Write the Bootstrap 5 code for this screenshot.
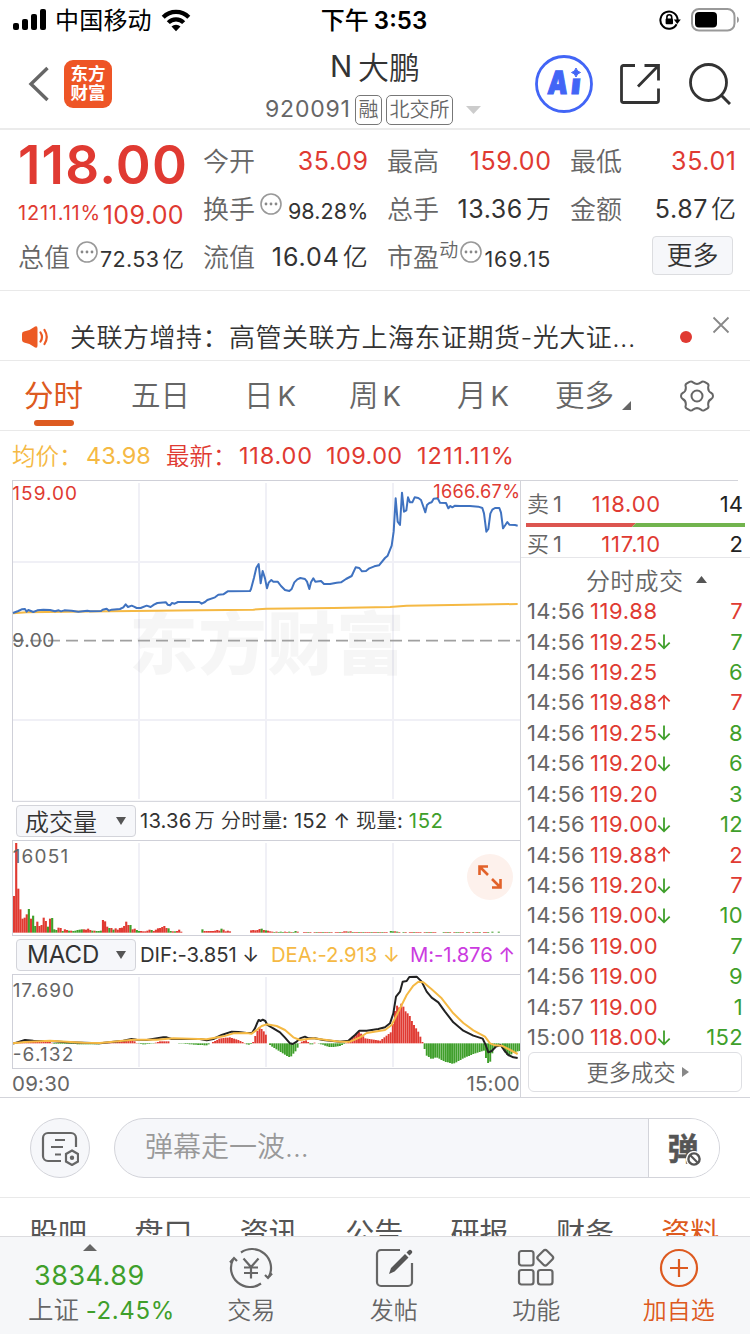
<!DOCTYPE html>
<html lang="zh-CN">
<head>
<meta charset="utf-8">
<meta name="viewport" content="width=device-width, initial-scale=1">
<title>N大鹏 920091</title>
<link href="https://cdn.jsdelivr.net/npm/bootstrap@5.3.0/dist/css/bootstrap.min.css" rel="stylesheet">
<style>
:root{--up:#e03a32;--down:#3f9f2b;--ink:#333;--mute:#666;--brand:#dd5a20;--avg:#f5b944;--rule:#d3d4da}
body{width:750px;height:1334px;overflow:hidden;background:#fff;color:var(--ink);font-family:Inter,"Noto Sans CJK SC",sans-serif;line-height:1;font-size:25px}
svg{display:block;flex:none}
svg text{font-family:Inter,"Noto Sans CJK SC",sans-serif}
.up{color:var(--up)}.down{color:var(--down)}.mute{color:var(--mute)}.brand{color:var(--brand)}.avg{color:var(--avg)}
.up,.down,.mute,.brand,.avg,.nw{white-space:nowrap}
.thin{font-weight:350}
.statusbar{height:40px;padding:0 11px 0 13px;color:#000;font-size:24px}
.statusbar>div{flex:1}
.topbar{height:90px;border-bottom:2px solid #ebebeb}
.logo{width:48px;height:48px;border-radius:9px;background:#ee5526;color:#fff;font-size:17.5px;font-weight:700;line-height:18.5px;padding-top:5px;margin-left:14px}
.title-line{font-size:29.5px;height:34px}
.chip{border:1.5px solid #777;border-radius:5px;height:30px;font-size:20px;line-height:28px;padding:0 2.5px;color:#666;font-weight:350}
.quote{height:161px;padding:7px 14px 0 18px;border-bottom:1px solid #e9e9e9}
.quote-grid{display:grid;grid-template-columns:166px 165px 164px 166px;column-gap:19px;grid-auto-rows:48px}
.quote-grid>div{display:flex;justify-content:space-between;align-items:center;white-space:nowrap}
.lab{font-size:26px;color:var(--mute);letter-spacing:.1px;padding-top:2px;font-weight:350}
.val{font-size:25px;letter-spacing:.6px;margin-right:-.6px}
.val-sm{font-size:21.5px;padding-top:5px;letter-spacing:.4px;margin-right:-.4px}
.btn-more{width:81px;height:39px;border:1.5px solid #dcdde0;border-radius:4px;background:#f6f7fa;font-size:26px;font-weight:350;padding:0;line-height:38px;color:var(--ink);margin-top:-4px}
.notice{height:70px;padding:0 20px 0 22px;border-bottom:1px solid #e9e9e9}
.periods{height:70px;border-bottom:1px solid #e9e9e9;display:grid;grid-template-columns:107px 113px 105px 108px 98px 125px 1fr;padding-left:24px;font-size:29.5px;color:var(--mute);align-items:center;white-space:nowrap;font-weight:350}
.periods b{font-weight:400;font-size:27.5px;margin-left:4px}
.periods .on{position:relative;color:var(--brand);font-weight:400}
.periods .on::after{content:"";position:absolute;left:10px;top:39px;width:40px;height:6px;border-radius:3px;background:var(--brand)}
.legend-line{height:49px;padding-left:12px;font-size:23.5px}
.market{height:618px;border-bottom:1.5px solid var(--rule)}
.charts{width:521px;padding-left:12px;border-right:1px solid var(--rule)}
.ind{height:38px;padding-left:4px;font-size:20.3px;white-space:nowrap}
.pick{width:120px;height:32px;border:1.5px solid var(--rule);border-radius:4px;background:#f6f7fa;font-size:24px;padding:0 9px 0 8px}
.pane{position:relative}
.expand{position:absolute;right:7px;top:14px;width:46px;height:46px;border-radius:50%;background:#fdf1ec}
.tape{width:229px}
.bidask{height:78px;border-bottom:1.5px solid #e6e6e9;font-size:22px}
.bidask .up{letter-spacing:.8px}
.bidask::before{content:"";display:block;width:217px;height:1px;background:var(--rule)}
.lot{color:#222}
.book{display:grid;grid-template-columns:55px 79px 1fr;height:40px;padding:0 7px 0 6px;align-items:center}
.tick{display:grid;grid-template-columns:63px 1fr auto;height:30.43px;padding:0 7px 0 6px;align-items:center;font-size:22px}
.btn-all{height:40px;margin:0 8px 0 7px;border:1px solid #dedfe3;border-radius:6px;font-size:22.3px}
.danmu{height:100px;border-bottom:1px solid #e9e9e9;padding:1px 30px 0}
.round{width:60px;height:60px;border-radius:50%;border:1px solid var(--rule);background:#f6f7fa}
.pill{width:606px;height:60px;border-radius:30px;border:1px solid var(--rule);background:#f6f7fa;overflow:hidden;font-size:28px;color:#999}
.pill-end{width:71px;border-left:1px solid var(--rule);background:#fff;color:#555;font-size:31px;font-weight:700}
.sections{height:38px;overflow:hidden;display:grid;grid-template-columns:repeat(7,105.4px);padding:21px 0 0 29px;font-size:29px;color:#555;white-space:nowrap}
.dock{height:98px;background:#f6f7f9;border-top:1px solid #dcdcdf;display:grid;grid-template-columns:180px repeat(4,142.5px);font-size:24px;color:var(--mute)}
.dock-item{display:flex;flex-direction:column;align-items:center;padding-top:10px;gap:10px}
.dock-item>span{height:24px;white-space:nowrap;font-weight:350}
</style>
</head>
<body>
<svg width="0" height="0" class="position-absolute">
  <symbol id="dots" viewBox="0 0 22 22"><circle cx="11" cy="11" r="10" fill="none" stroke="#999" stroke-width="1.6"/><g fill="#888"><circle cx="6" cy="11" r="1.4"/><circle cx="11" cy="11" r="1.4"/><circle cx="16" cy="11" r="1.4"/></g></symbol>
  <symbol id="dn" viewBox="0 0 14 18"><path d="M7 1.5V16M1 10.2 7 16.2 13 10.2" fill="none" stroke="currentColor" stroke-width="1.9"/></symbol>
  <symbol id="upa" viewBox="0 0 14 18"><path d="M7 16.5V2M1 7.8 7 1.8 13 7.8" fill="none" stroke="currentColor" stroke-width="1.9"/></symbol>
</svg>

<div class="statusbar d-flex align-items-center">
  <div class="d-flex align-items-center">
    <svg width="34" height="22" viewBox="0 0 34 22"><rect x="0" y="14" width="6" height="7" rx="2"/><rect x="9" y="10" width="6" height="11" rx="2"/><rect x="18" y="5" width="6" height="16" rx="2"/><rect x="27" y="0" width="6" height="21" rx="2"/></svg>
    <span class="nw" style="letter-spacing:.2px;margin-left:8px;padding-top:2px">中国移动</span>
    <svg style="margin-left:8px" width="32" height="24" viewBox="0 0 32 24"><g fill="none" stroke="#000" stroke-width="4.2"><path d="M3.2 9.2a18 18 0 0 1 25.6 0"/><path d="M8.3 14.6a10.6 10.6 0 0 1 15.4 0"/></g><path d="M16 23.2l-4.5-4.6a6.4 6.4 0 0 1 9 0z"/></svg>
  </div>
  <span class="nw" style="font-weight:600;padding:1px 4px 0 0"><span style="font-weight:500">下午</span><span style="margin-left:5px">3:53</span></span>
  <div class="d-flex align-items-center justify-content-end">
    <svg width="80" height="26" viewBox="0 0 80 26"><g fill="none" stroke="#000" stroke-width="2"><path d="M17.6 17.2a8.6 8.6 0 1 1 1-4.2"/><path d="M7.9 12v-1.800a2.400 2.400 0 0 1 4.800 0V12" stroke-width="1.600"/></g><path d="M14.800 12.600h7l-3.500 4.400z"/><rect x="6.600" y="11.600" width="7.400" height="5.600" rx="1"/><rect x="33" y="2" width="42.500" height="21.500" rx="7" fill="none" stroke="#999" stroke-width="2"/><rect x="36" y="5" width="22" height="15.500" rx="4"/><path d="M78 9.500v6.500q2-1 2-3.200T78 9.500" fill="#999"/></svg>
  </div>
</div>

<div class="topbar d-flex">
  <div class="d-flex align-items-center" style="width:265px;padding:0 0 0 28px">
    <svg width="22" height="38" viewBox="0 0 22 38"><path d="M19.500 3 3 19l16.500 16" fill="none" stroke="#666" stroke-width="3.400"/></svg>
    <div class="logo text-center">东方<br>财富</div>
  </div>
  <div class="d-flex flex-column" style="width:220px;padding-top:10px">
    <div class="title-line d-flex align-items-center justify-content-center nw">N<span class="thin" style="margin-left:6px;font-size:31px">大鹏</span></div>
    <div class="d-flex align-items-center nw mute" style="height:31px;margin-top:10px">
      <span style="font-size:23px;letter-spacing:.8px;width:94px">920091</span>
      <span class="chip" style="margin-right:4px">融</span><span class="chip">北交所</span>
      <svg class="ms-2" width="24" height="8" viewBox="0 0 24 8"><path d="M5 0h15l-7.500 8z" fill="#ccc"/></svg>
    </div>
  </div>
  <div class="d-flex align-items-center" style="padding:0 0 0 50px">
    <svg width="58" height="58" viewBox="0 0 58 58"><circle cx="29" cy="29" r="27.500" fill="#fff" stroke="#4265f6" stroke-width="2.800"/><g font-size="32" font-weight="900" fill="#4265f6" stroke="#4265f6"><text transform="translate(12 39) skewX(-5)" stroke-width="1.200" textLength="20" lengthAdjust="spacingAndGlyphs">A</text><text transform="translate(35 39) skewX(-6)" stroke-width=".8" textLength="10" lengthAdjust="spacingAndGlyphs">i</text></g><path d="M34 11h14v12.300H34z" fill="#fff"/><path d="M41 13q1 3.700 4.500 4.500-3.500.800-4.500 4.500-1-3.700-4.500-4.500 3.500-.8 4.500-4.500z" fill="#4265f6" stroke="#4265f6"/></svg>
    <svg style="margin-left:26px" width="42" height="42" viewBox="0 0 42 42"><g fill="none" stroke="#333" stroke-width="2.800"><path d="M16 2.500H4.500a2 2 0 0 0-2 2v33a2 2 0 0 0 2 2h33a2 2 0 0 0 2-2V25.500M25.500 2.500h14v15M19 23.500 39 3"/></g></svg>
    <svg style="margin-left:28px" width="42" height="42" viewBox="0 0 42 42"><circle cx="19.500" cy="19.500" r="18" fill="none" stroke="#333" stroke-width="2.800"/><path d="M32.500 32.500 41 41" stroke="#333" stroke-width="3"/></svg>
  </div>
</div>

<div class="quote">
  <div class="quote-grid">
    <div><span class="up" style="font-size:53px;font-weight:600;padding-top:8px;letter-spacing:1.2px">118.00</span></div>
    <div><span class="lab">今开</span><span class="val up">35.09</span></div>
    <div><span class="lab">最高</span><span class="val up">159.00</span></div>
    <div><span class="lab">最低</span><span class="val up">35.01</span></div>
    <div class="up"><span style="font-size:20px;padding-top:8px;letter-spacing:.8px">1211.11%</span><span style="font-size:25px;padding-top:13px;letter-spacing:.4px">109.00</span></div>
    <div><span class="lab">换手</span><svg width="22" height="22" style="margin:-10px 0 0 5px"><use href="#dots"/></svg><span class="val-sm ms-auto" style="letter-spacing:.1px">98.28%</span></div>
    <div><span class="lab">总手</span><span class="val">13.36<span class="thin" style="margin-left:3px">万</span></span></div>
    <div><span class="lab">金额</span><span class="val">5.87<span class="thin" style="margin-left:3px">亿</span></span></div>
    <div><span class="lab">总值</span><svg width="22" height="22" style="margin:-10px 0 0 6px"><use href="#dots"/></svg><span class="val-sm ms-auto">72.53<span class="thin" style="margin-left:3px">亿</span></span></div>
    <div><span class="lab">流值</span><span class="val" style="letter-spacing:.9px">16.04<span class="thin" style="margin-left:3px">亿</span></span></div>
    <div><span class="lab">市盈</span><span class="mute thin" style="font-size:19px;margin-top:-14px">动</span><svg width="22" height="22" style="margin:-10px 0 0 2px"><use href="#dots"/></svg><span class="val-sm ms-auto" style="letter-spacing:1px">169.15</span></div>
    <div class="justify-content-end" style="padding-right:3px"><button class="btn btn-more">更多</button></div>
  </div>
</div>

<div class="notice d-flex align-items-center">
  <svg width="27" height="22" viewBox="0 0 27 22" style="margin-top:23px"><path d="M0 8q0-2 2-2.400Q8 4.500 11.500 1.500q4-3 4 1v17q0 4-4 1Q8 17.500 2 16.400 0 16 0 14z" fill="#ec5a24"/><g fill="none" stroke="#ec5a24" stroke-width="2.200" stroke-linecap="round"><path d="M18.500 6.500q3 4.500 0 9M22.500 4q4.500 7 0 14"/></g></svg>
  <span class="nw thin" style="font-size:26px;letter-spacing:.5px;margin:25px 0 0 21px;width:610px">关联方增持：高管关联方上海东证期货-光大证...</span>
  <svg width="12" height="12" style="margin-top:23px"><circle cx="6" cy="6" r="6" fill="#e03a32"/></svg>
  <svg width="18" height="18" viewBox="0 0 18 18" style="margin-left:20px;margin-top:-2px"><path d="M1.500 1.500l15 15m0-15l-15 15" stroke="#888" stroke-width="1.800"/></svg>
</div>

<div class="periods">
  <span class="on">分时</span><span>五日</span><span>日<b>K</b></span><span>周<b>K</b></span><span>月<b>K</b></span>
  <span class="d-flex align-items-center">更多<svg width="9" height="9" style="margin:20px 0 0 8px"><path d="M9 0v9H0z" fill="#666"/></svg></span>
  <svg width="34" height="32" viewBox="0 0 34 32"><g fill="none" stroke="#666" stroke-width="2"><path d="M9.500 1.800q2-1 3.500.6 4 3 8 0 1.500-1.600 3.500-.6l3 1.800q1.500 1 .8 2.800-.8 4.800 3 6.600 1.700.8 1.700 3t-1.700 3q-3.800 1.800-3 6.600.7 1.800-.8 2.800l-3 1.800q-2 1-3.500-.6-4-3-8 0-1.500 1.600-3.500.6l-3-1.800q-1.500-1-.8-2.800.8-4.800-3-6.600Q1 18.200 1 16t1.700-3q3.800-1.800 3-6.600-.7-1.800.8-2.800z"/><circle cx="17" cy="16" r="5.500"/></g></svg>
</div>

<div class="legend-line d-flex align-items-center nw">
  <span class="avg thin" style="width:74px;padding-top:2px">均价：</span><span class="avg" style="width:80px">43.98</span>
  <span class="up thin" style="width:73px;padding-top:2px">最新：</span><span class="up" style="width:87px;letter-spacing:.8px">118.00</span><span class="up" style="width:91px;letter-spacing:.4px">109.00</span><span class="up" style="letter-spacing:1px">1211.11%</span>
</div>

<div class="market d-flex">
  <div class="charts">
    <svg width="508" height="322" viewBox="36 15 1524 966">
      <g stroke="#f0f0f6" stroke-width="6"><path d="M417 24V972M798 24V972M1179 24V972M39 261H1560M39 735H1560"/></g>
      <text x="388" y="583" font-size="205" font-weight="900" fill="#000" fill-opacity=".035" textLength="826">东方财富</text>
      <path d="M36 497H1560" stroke="#a0a0a0" stroke-width="5" stroke-dasharray="36 18"/>
      <path d="M36 16.500H1560M37.500 15V980M36 979H1560" stroke="#cfd0d8" stroke-width="3"/>
      <polyline fill="none" stroke="#f5b944" stroke-width="6" points="39,415 80,412 200,410 400,408 600,406 760,404 800,401 1000,399 1170,396 1220,392 1400,389 1553,387"/>
      <polyline fill="none" stroke="#3f72c0" stroke-width="6" stroke-linejoin="round" points="39,414 55,408 65,403 75,402 80,410 85,405 100,411 112,406 130,404 150,405 165,409 176,406 183,409 193,406 215,407 235,410 262,407 270,409 303,408 308,404 320,401 327,407 335,404 360,402 370,397 377,388 384,396 395,392 402,395 410,399 422,399 440,392 452,396 462,389 472,384 498,382 503,389 510,391 516,384 524,386 534,381 598,381 605,386 615,381 622,375 645,367 655,359 670,358 683,349 750,348 753,342 762,308 769,278 776,267 782,325 788,288 795,310 801,340 806,323 814,315 820,320 833,320 843,333 855,345 868,348 875,342 883,322 892,313 901,309 915,312 921,320 928,342 933,322 940,310 946,320 963,318 972,327 990,327 1010,323 1023,322 1038,312 1055,303 1067,277 1078,279 1086,289 1098,288 1108,280 1123,274 1137,271 1155,249 1163,242 1175,212 1181,170 1187,70 1193,140 1200,150 1206,53 1212,110 1219,106 1224,67 1230,82 1237,82 1244,67 1255,69 1263,75 1276,112 1281,90 1288,84 1295,82 1301,71 1313,70 1320,83 1338,84 1345,100 1351,93 1357,97 1365,92 1380,93 1410,93 1435,95 1447,99 1452,115 1459,170 1465,162 1471,116 1477,104 1485,99 1498,99 1503,113 1509,160 1516,150 1522,141 1528,149 1545,150 1553,152"/>
      <g font-size="57"><text x="37" y="75" fill="#e03a32" textLength="194">159.00</text><text x="1300" y="70" font-size="54.500" fill="#e03a32" textLength="260">1666.67%</text><text x="37" y="516" fill="#666" textLength="126">9.00</text></g>
    </svg>
    <div class="ind d-flex align-items-center">
      <div class="pick d-flex align-items-center justify-content-between"><span class="pt-1 thin">成交量</span><svg width="10" height="8"><path d="M0 0h10L5 8z" fill="#555"/></svg></div>
      <span style="margin-left:4px;letter-spacing:.15px;padding-top:1px">13.36<span class="thin" style="margin-left:3px">万 分时量</span>: 152 ↑ <span class="thin">现量</span>: <span class="down" style="letter-spacing:.6px">152</span></span>
    </div>
    <div class="pane">
      <svg width="508" height="96" viewBox="36 135 1524 288">
        <path d="M417 144V414M798 144V414M1179 144V414" stroke="#f0f0f6" stroke-width="6"/>
        <g id="volume"></g>
        <path d="M36 136.500H1560M37.500 135V423M36 421.500H1560" stroke="#cfd0d8" stroke-width="3" fill="none"/>
        <text x="38" y="205" font-size="57" fill="#666" textLength="167">16051</text>
      </svg>
      <div class="expand d-flex align-items-center justify-content-center"><svg width="24" height="24" viewBox="0 0 24 24"><path d="M1.500 10V1.500H10M2 2l8 8M22.500 14v8.500H14M22 22l-8-8" fill="none" stroke="#e2622a" stroke-width="2.600"/></svg></div>
    </div>
    <div class="ind d-flex align-items-center">
      <div class="pick d-flex align-items-center justify-content-between"><span style="padding-left:2px">MACD</span><svg width="10" height="8"><path d="M0 0h10L5 8z" fill="#555"/></svg></div>
      <span style="margin-left:4px;width:131px;letter-spacing:-.1px">DIF:-3.851 ↓</span><span class="avg" style="width:139px;letter-spacing:-.05px">DEA:-2.913 ↓</span><span style="color:#cb3be0;letter-spacing:-.1px">M:-1.876 ↑</span>
    </div>
    <svg width="508" height="95" viewBox="36 537 1524 285">
      <path d="M417 546V816M798 546V816M1179 546V816" stroke="#f0f0f6" stroke-width="6"/>
      <g id="hist"></g>
      <g fill="none" stroke-width="6" stroke-linejoin="round">
      <polyline stroke="#222" points="39,746 75,735 100,737 150,738 200,742 300,745 370,737 395,732 410,734 440,735 490,727 500,727 515,732 600,732 620,736 640,732 665,720 695,710 715,711 740,714 756,714 765,700 772,683 776,675 782,678 788,674 796,678 802,690 820,700 840,712 855,728 870,745 878,747 890,740 900,730 915,725 925,730 945,730 970,735 1020,740 1045,737 1065,720 1078,707 1100,707 1135,702 1155,697 1170,685 1180,655 1188,605 1200,590 1208,560 1220,558 1228,546 1250,545 1265,560 1280,590 1295,608 1315,622 1335,650 1360,682 1390,707 1420,722 1448,731 1457,750 1465,772 1475,768 1488,755 1502,750 1512,765 1525,780 1540,787 1553,789"/>
      <polyline stroke="#f5b944" points="39,745 75,741 150,737 250,743 300,744 400,734 470,734 520,730 620,733 670,724 700,715 740,714 755,716 770,705 785,693 800,688 830,693 855,705 880,727 900,735 940,730 1020,740 1050,740 1080,727 1100,714 1155,705 1175,690 1200,640 1220,600 1240,572 1255,560 1270,562 1295,583 1325,610 1360,655 1390,684 1420,706 1455,725 1470,745 1485,751 1505,752 1525,762 1553,777"/></g>
      <path d="M36 538.500H1560M37.500 537V822M36 820.500H1560" stroke="#cfd0d8" stroke-width="3" fill="none"/>
      <g font-size="57" fill="#666"><text x="38" y="605" textLength="184">17.690</text><text x="38" y="797" textLength="182">-6.132</text></g>
    </svg>
    <div class="d-flex justify-content-between align-items-center mute" style="height:30px;font-size:20.500px;letter-spacing:.2px"><span>09:30</span><span>15:00</span></div>
  </div>

  <div class="tape">
    <div class="bidask">
      <div class="book" style="height:42px;padding-top:3px"><span class="mute thin">卖<span class="fw-normal ms-1">1</span></span><span class="up text-end">118.00</span><span class="lot text-end">14</span></div>
      <svg width="229" height="4"><path d="M5 0H115L111 4H5z" fill="#dc5550"/><path d="M115 0H224V4H111z" fill="#72b44e"/></svg>
      <div class="book" style="height:34px"><span class="mute thin">买<span class="fw-normal ms-1">1</span></span><span class="up text-end">117.10</span><span class="lot text-end">2</span></div>
    </div>
    <div class="d-flex align-items-center mute thin" style="height:38px;padding:9px 0 0 65px;font-size:24px;letter-spacing:.3px">分时成交<svg width="11" height="7" style="margin:-4px 0 0 13px"><path d="M0 7h11L5.500 0z" fill="#555"/></svg></div>
    <div id="ticks"></div>
    <div class="btn-all d-flex align-items-center justify-content-center mute thin"><span style="padding:2px 0 0 5px">更多成交</span><svg width="7" height="10" style="margin-left:6px"><path d="M0 0v10l7-5z" fill="#888"/></svg></div>
  </div>
</div>

<div class="danmu d-flex align-items-center">
  <div class="round d-flex align-items-center justify-content-center"><svg width="38" height="36" viewBox="0 0 38 36"><g fill="none" stroke="#666" stroke-width="2.200"><path d="M20 31H7a5 5 0 0 1-5-5V8a5 5 0 0 1 5-5h23a5 5 0 0 1 5 5v9M14 10h10M10 17h12M14 24.500h6"/><path d="M31 20.500l6 3.500v7.500l-6 3.500-6-3.500V24z"/></g><circle cx="31" cy="27.700" r="2.200" fill="#666"/></svg></div>
  <div class="pill d-flex" style="margin-left:24px">
    <div class="d-flex align-items-center flex-grow-1 thin" style="padding:0 0 3px 30px">弹幕走一波...</div>
    <div class="pill-end d-flex align-items-center justify-content-center position-relative"><span style="-webkit-text-stroke:.5px #555;margin-right:2px">弹</span><svg class="position-absolute" style="left:37px;top:32px" width="16" height="16"><circle cx="8" cy="8" r="5.600" fill="#fff" stroke="#fff" stroke-width="5"/><circle cx="8" cy="8" r="5.600" fill="none" stroke="#555" stroke-width="2.400"/><path d="M4 4l8 8" stroke="#555" stroke-width="2.200"/></svg></div>
  </div>
</div>

<div class="sections"><span>股吧</span><span>盘口</span><span>资讯</span><span>公告</span><span>研报</span><span>财务</span><span class="brand">资料</span></div>

<div class="dock">
  <div class="text-nowrap" style="padding-left:28px">
    <svg width="14" height="7" style="margin:7px 0 0 55px"><path d="M0 7h14L7 0z" fill="#666"/></svg>
    <div class="down" style="font-size:27px;margin:11px 0 0 6px;height:27px;letter-spacing:.5px">3834.89</div>
    <div style="margin-top:8px;height:24px"><span class="thin" style="font-size:25.500px">上证</span> <span class="down" style="letter-spacing:.6px">-2.45%</span></div>
  </div>
  <div class="dock-item"><svg width="44" height="42" viewBox="0 0 44 42"><g fill="none" stroke="#666" stroke-width="2.200"><path d="M12 5.500a19 19 0 0 1 28 24M32 36.500a19 19 0 0 1-28-24"/><path d="M1 15.500l4-4.500 3 3M43 26.500l-4 4.500-3-3M14.500 11.500l7.500 8.500 7.500-8.500M22 20v11.500M15 20.500h14M15 26h14"/></g></svg><span>交易</span></div>
  <div class="dock-item"><svg width="40" height="42" viewBox="0 0 40 42"><path d="M26 3H7a4 4 0 0 0-4 4v28a4 4 0 0 0 4 4h27a4 4 0 0 0 4-4V16" fill="none" stroke="#666" stroke-width="2.200"/><path d="M15 27l2-6L31 7l3.500 3.500L20.500 24.500zM32.500 5.500l2-2q1.500-1.500 3 0t0 3l-2 2z" fill="#555"/></svg><span>发帖</span></div>
  <div class="dock-item"><svg width="40" height="42" viewBox="0 0 40 42"><g fill="none" stroke="#666" stroke-width="2.200"><rect x="3" y="4" width="14.500" height="14.500" rx="2.500"/><rect x="3" y="23" width="14.500" height="14.500" rx="2.500"/><rect x="22" y="23" width="14.500" height="14.500" rx="2.500"/><rect x="23" y="4.500" width="12.500" height="12.500" rx="2.500" transform="rotate(45 29.250 10.750)"/></g></svg><span>功能</span></div>
  <div class="dock-item brand"><svg width="42" height="42" viewBox="0 0 42 42"><g fill="none" stroke="#dd5a20" stroke-width="2.200"><circle cx="21" cy="21" r="18"/><path d="M21 12v18M12 21h18"/></g></svg><span>加自选</span></div>
</div>

<script>
// Minute bars: positive = rising (red), negative = falling (green)
const STEP = 6.35, X0 = 39;
const vol = [110,269,132,70,42,45,55,-71,42,-51,-20,33,20,23,45,35,-18,42,-44,-10,-8,15,14,-5,10,8,-6,6,-5,-6,-8,-9,-10,10,9,12,8,-6,6,-5,-5,-6,38,34,18,-14,14,-9,13,9,14,15,20,33,23,-23,10,12,-8,-5,5,4,4,6,9,-8,5,9,13,14,17,20,14,-13,-5,4,-4,5,9,3,0,0,0,0,0,0,0,0,0,-10,5,5,5,5,5,6,8,6,-12,9,4,6,4,0,0,0,0,0,0,0,0,0,7,8,7,8,11,-12,8,-7,6,4,3,-2,3,-2,-3,-2,3,2,-3,2,-2,-5,3,0,0,2,2,-2,2,0,2,-2,2,2,-2,2,2,-2,2,0,2,2,-2,2,4,4,-3,4,-2,2,2,-2,2,-2,2,2,2,-2,2,2,-2,2,-2,2,2,0,-5,-4,4,-3,2,0,-2,2,0,2,2,-2,2,2,2,0,2,-2,2,-2,2,2,0,0,0,-2,2,-2,2,0,2,-2,-2,2,2,0,-2,2,0,-2,2,2,-2,0,2,2,-2,0,-3,0,0,-3];
const macd = [[39,0],[70,4],[150,5],[160,-2],[300,-3],[310,2],[360,6],[400,9],[412,0],[430,-3],[460,-1],[480,6],[505,6],[512,0],[550,-1],[600,-5],[620,-6],[632,0],[660,15],[690,18],[710,12],[730,3],[745,-5],[758,0],[765,20],[778,50],[790,38],[800,22],[804,0],[820,-12],[870,-43],[890,-20],[898,0],[905,5],[920,9],[928,0],[935,-6],[942,2],[965,-3],[990,-12],[1020,-8],[1038,0],[1060,22],[1078,35],[1095,15],[1140,8],[1175,35],[1183,85],[1188,115],[1198,108],[1206,122],[1215,98],[1228,85],[1240,58],[1255,35],[1267,5],[1271,-5],[1278,-35],[1295,-47],[1310,-42],[1335,-55],[1360,-62],[1390,-45],[1420,-32],[1452,-22],[1462,-58],[1469,-62],[1477,-30],[1485,-12],[1502,0],[1510,-20],[1525,-40],[1540,-28],[1562,-22]];
const bars = (id, data, base, w) => {
  document.getElementById(id).innerHTML = data.map((h, i) => h ? `<rect x="${(X0 + i * STEP).toFixed(1)}" y="${h > 0 || id === 'volume' ? base - Math.abs(h) : base}" width="${w}" height="${Math.abs(h)}" fill="${h > 0 ? '#e03a32' : '#3f9f2b'}"/>` : '').join('');
};
bars('volume', vol, 413, 6.4);
const hist = Array.from({length: 240}, (_, i) => {
  const x = X0 + i * STEP + 3, k = Math.max(1, macd.findIndex(p => p[0] > x));
  const [a, b] = [macd[k - 1], macd[k]];
  return Math.round(a[1] + (b[1] - a[1]) * (x - a[0]) / (b[0] - a[0]));
});
bars('hist', hist, 745, 5.8);

const ticks = ['14:56 119.88 = 7 up','14:56 119.25 dn 7 down','14:56 119.25 = 6 down','14:56 119.88 upa 7 up','14:56 119.25 dn 8 down','14:56 119.20 dn 6 down','14:56 119.20 = 3 down','14:56 119.00 dn 12 down','14:56 119.88 upa 2 up','14:56 119.20 dn 7 up','14:56 119.00 dn 10 down','14:56 119.00 = 7 down','14:56 119.00 = 9 down','14:57 119.00 = 1 down','15:00 118.00 dn 152 down'];
document.getElementById('ticks').innerHTML = ticks.map(t => {
  const [time, price, dir, lot, tone] = t.split(' ');
  const arrow = dir === '=' ? '' : `<svg width="14" height="17" class="${dir === 'dn' ? 'down' : 'up'}"><use href="#${dir}"/></svg>`;
  return `<div class="tick"><span class="mute" style="letter-spacing:.3px">${time}</span><span class="up d-flex align-items-center"><span style="width:67px;letter-spacing:.6px">${price}</span>${arrow}</span><span class="${tone}" style="letter-spacing:.3px">${lot}</span></div>`;
}).join('');
</script>
<script src="https://cdn.jsdelivr.net/npm/bootstrap@5.3.0/dist/js/bootstrap.bundle.min.js"></script>
</body>
</html>
